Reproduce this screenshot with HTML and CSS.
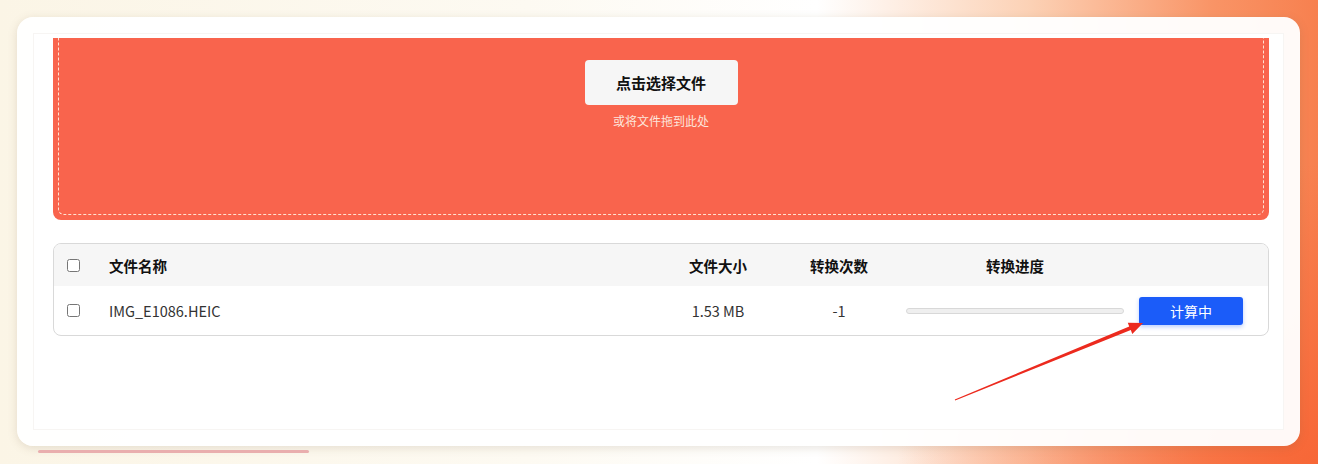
FILE: index.html
```html
<!DOCTYPE html>
<html lang="zh-CN">
<head>
    <meta charset="UTF-8">
    <meta name="viewport" content="width=device-width, initial-scale=1.0">
    <title>文件转换</title>
    <link rel="stylesheet" href="styles.css">
</head>
<body>
    <div class="card">
        <div class="frame">
            <div class="scroll">
                <div class="content">
                    <div class="dropzone">
                        <button class="pick-btn">点击选择文件</button>
                        <div class="drop-hint">或将文件拖到此处</div>
                    </div>

                    <div class="file-table">
                        <div class="row head">
                            <div class="cell check"><input type="checkbox"></div>
                            <div class="cell name">文件名称</div>
                            <div class="cell center">文件大小</div>
                            <div class="cell center">转换次数</div>
                            <div class="cell center">转换进度</div>
                            <div class="cell"></div>
                        </div>
                        <div class="row">
                            <div class="cell check"><input type="checkbox"></div>
                            <div class="cell name">IMG_E1086.HEIC</div>
                            <div class="cell center">1.53 MB</div>
                            <div class="cell center">-1</div>
                            <div class="cell progress-cell"><div class="progress"><div class="progress-fill"></div></div></div>
                            <div class="cell action"><button class="calc-btn">计算中</button></div>
                        </div>
                    </div>
                </div>
            </div>
        </div>
    </div>
    <div class="loading-bar"></div>

    <!-- annotation arrow pointing at the button -->
    <svg class="arrow" width="1318" height="464" viewBox="0 0 1318 464">
        <polygon points="955.2,400.5 954.8,399.5 1129.2,326.4 1127.8,322.8 1143,323 1132.3,333.9 1130.8,330.1" fill="#ec2a1e"/>
    </svg>
</body>
</html>
```

FILE: styles.css
```css
html, body {
    margin: 0;
    height: 464px;
    overflow: hidden;
}
body {
    font-family: "Noto Sans CJK SC", "Noto Sans", sans-serif;
    color: #222;
    padding: 17px 18px 0 17px;
    box-sizing: border-box;
    background:
        radial-gradient(ellipse 420px 300px at 100% 100%, rgba(247, 100, 52, 0.9), rgba(247, 100, 52, 0)),
        linear-gradient(90deg, #fbf5e6 0%, #fdfaf2 40%, #ffffff 62%, #fcd2b6 78%, #f99466 92%, #f7804f 100%);
    position: relative;
}
.card {
    background: rgba(255, 255, 255, 0.96);
    border-radius: 16px;
    padding: 16px;
    box-shadow: 0 2px 10px rgba(120, 100, 70, 0.18);
    height: 429px;
    box-sizing: border-box;
}
.frame {
    border: 1px solid #f7f5f3;
    height: 397px;
    box-sizing: border-box;
    background: #fff;
}
.scroll {
    margin-top: 4px;
    height: 390px;
    overflow: hidden;
}
.content {
    padding: 0 14px 0 19px;
}
.dropzone {
    margin-top: -20px;
    height: 202px;
    background: #f9644d;
    border-radius: 8px;
    position: relative;
    display: flex;
    flex-direction: column;
    align-items: center;
    padding-top: 42px;
    box-sizing: border-box;
}
.dropzone::after {
    content: "";
    position: absolute;
    inset: 5px;
    border: 1px dashed rgba(255, 240, 225, 0.9);
    border-radius: 6px;
    pointer-events: none;
}
.pick-btn {
    width: 153px;
    height: 45px;
    background: #f6f6f6;
    border: none;
    border-radius: 4px;
    font-family: inherit;
    font-size: 15px;
    font-weight: bold;
    color: #111;
}
.drop-hint {
    margin-top: 7px;
    font-size: 12px;
    color: #fde6dc;
}
.file-table {
    margin-top: 23px;
    border: 1px solid #d9d9d9;
    border-radius: 8px;
    overflow: hidden;
    font-size: 14.5px;
}
.row {
    display: grid;
    grid-template-columns: 55px 1fr 120px 122px 230px 138px;
    align-items: center;
    height: 49px;
    color: #333;
}
.row.head {
    height: 42px;
    background: #f6f6f6;
    font-weight: bold;
    color: #111;
}
.cell.check {
    padding-left: 13px;
    display: flex;
}
.cell.check input {
    margin: 0;
    width: 13px;
    height: 13px;
}
.cell.center {
    text-align: center;
}
.progress-cell {
    padding-left: 6px;
}
.progress {
    width: 218px;
    height: 6px;
    border: 1px solid #d8d8d8;
    border-radius: 4px;
    background: #efefef;
    box-sizing: border-box;
}
.progress-fill {
    width: 0;
    height: 100%;
}
.action {
    padding-left: 9px;
}
.calc-btn {
    width: 104px;
    height: 28px;
    background: #1b5cf9;
    color: #fff;
    border: none;
    border-radius: 3px;
    font-family: inherit;
    font-size: 14px;
    box-shadow: 0 2px 4px rgba(27, 92, 249, 0.3);
}
.loading-bar {
    margin: 4px 0 0 21px;
    width: 271px;
    height: 3px;
    background: #e9aeae;
    border-radius: 2px;
}
.arrow {
    position: absolute;
    left: 0;
    top: 0;
    pointer-events: none;
}
```
